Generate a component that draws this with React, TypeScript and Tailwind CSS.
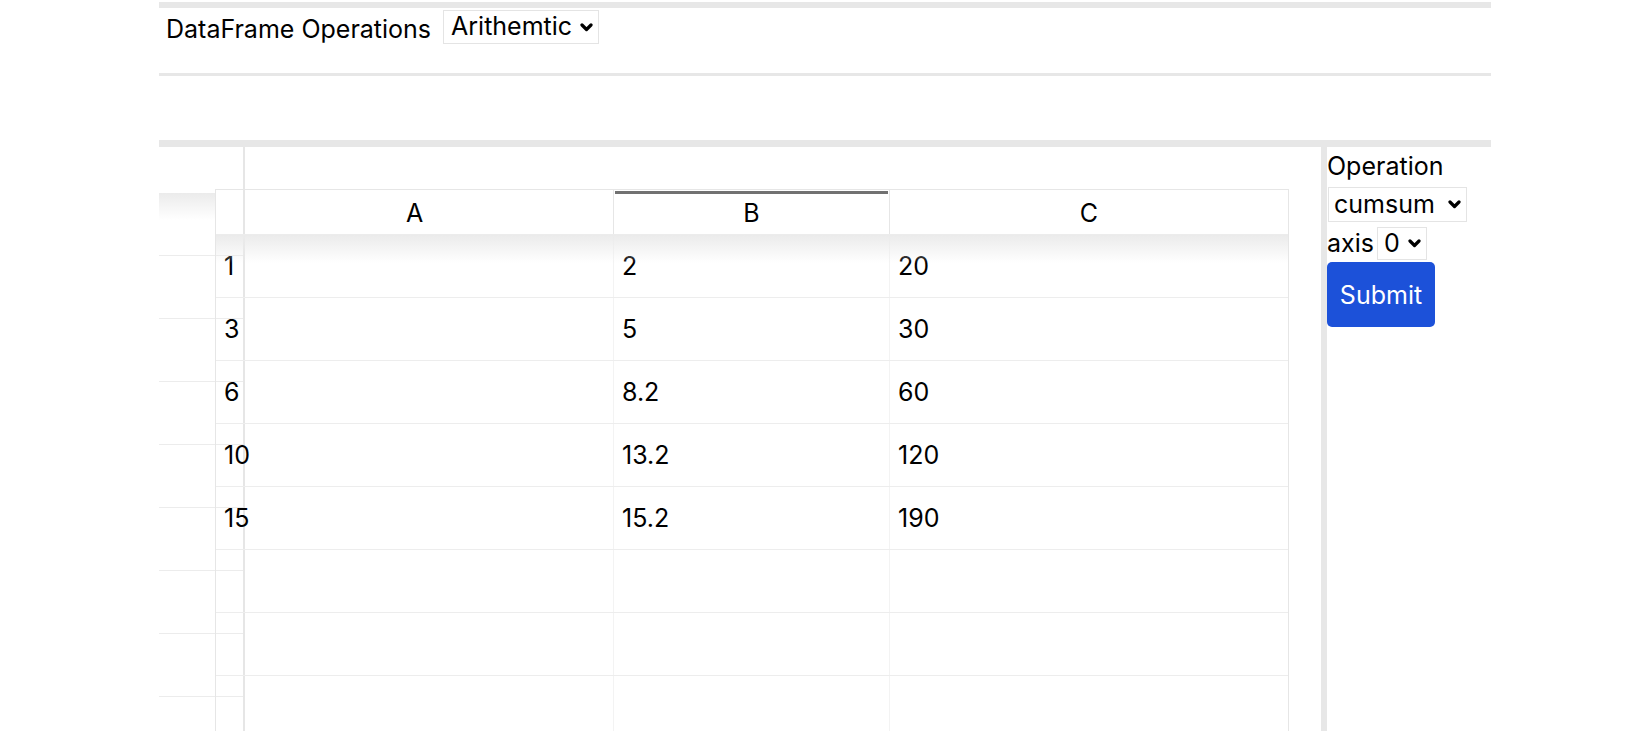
import React from 'react'

const ROWS: string[][] = [
  ['1', '2', '20'],
  ['3', '5', '30'],
  ['6', '8.2', '60'],
  ['10', '13.2', '120'],
  ['15', '15.2', '190'],
  ['', '', ''],
  ['', '', ''],
  ['', '', ''],
]

function Chevron() {
  return (
    <svg className="h-[9px] w-[13px] shrink-0" viewBox="0 0 13 9" fill="none" stroke="currentColor" strokeWidth={3.2} strokeLinecap="round" strokeLinejoin="round">
      <path d="M2 2 6.5 6.5 11 2" />
    </svg>
  )
}

function Dropdown({ value, options, className, pad }: { value: string; options: string[]; className: string; pad: string }) {
  return (
    <div className={`inline-flex items-center border border-[#e4e4e4] bg-white pr-[5px] ${className}`}>
      <select defaultValue={value} className={`min-w-0 flex-1 appearance-none bg-transparent outline-none ${pad}`}>
        {options.map(o => (
          <option key={o}>{o}</option>
        ))}
      </select>
      <Chevron />
    </div>
  )
}

function RowHeaders() {
  return (
    <div className="relative w-[86px] shrink-0 border-r-2 border-[#e6e6e6]">
      <div className="h-[109px] border-b border-[#ececec]" />
      {ROWS.map((_, i) => (
        <div key={i} className="h-[63px] border-b border-[#ececec]" />
      ))}
      <div className="pointer-events-none absolute left-0 top-[46px] h-[27px] w-[56px] bg-linear-to-b from-[#ebebeb] to-transparent" />
    </div>
  )
}

function Sheet() {
  return (
    <div className="relative ml-[-30px] mt-[42px] w-[1074px] shrink-0 self-start border-x border-t border-[#e6e6e6]">
      <div className="flex h-[45px] border-b border-[#ececec]">
        <div className="flex w-[397px] items-center justify-center pt-[3px]">A</div>
        <div className="relative flex w-[276px] items-center justify-center border-l border-[#e6e6e6] pt-[3px]">
          <div className="absolute inset-x-[1px] top-[1px] h-[3px] bg-[#717171]" />
          B
        </div>
        <div className="flex flex-1 items-center justify-center border-l border-[#e6e6e6] pt-[3px]">C</div>
      </div>
      <div className="relative">
        <div className="pointer-events-none absolute inset-x-0 top-0 h-[28px] bg-linear-to-b from-[#ebebeb] to-transparent" />
        {ROWS.map((r, i) => (
          <div key={i} className="flex h-[63px] border-b border-[#ededed]">
            <div className="flex w-[397px] items-center px-2 pt-[2px]">{r[0]}</div>
            <div className="flex w-[276px] items-center border-l border-[#f3f3f3] px-2 pt-[2px]">{r[1]}</div>
            <div className="flex flex-1 items-center border-l border-[#f3f3f3] px-2 pt-[2px]">{r[2]}</div>
          </div>
        ))}
      </div>
    </div>
  )
}

function Panel() {
  return (
    <div className="flex w-[164px] shrink-0 flex-col items-start pt-[4px]">
      <div className="leading-[30px]">Operation</div>
      <Dropdown value="cumsum" options={['cumsum', 'cumprod', 'cummax', 'cummin']} className="ml-[1px] mt-[6px] h-[35px] w-[139px]" pad="pl-[5px]" />
      <div className="mt-[5px] flex items-center">
        <span className="leading-[33px]">axis</span>
        <Dropdown value="0" options={['0', '1']} className="ml-[3px] h-[33px] w-[50px]" pad="pl-[6px]" />
      </div>
      <button className="mt-[2px] h-[65px] w-[108px] rounded-[5px] bg-[#1c51d9] pt-[2px] text-white">Submit</button>
    </div>
  )
}

export default function App() {
  return (
    <div className="h-screen overflow-hidden bg-white font-['Inter','Liberation_Sans',sans-serif] text-[25px] text-black">
      <div className="mx-auto w-[1332px]">
        <div className="mt-[2px] h-[6px] bg-[#e7e7e7]" />
        <div className="flex h-[65px] items-start pl-[7px] pt-[2px]">
          <span className="mt-[2px] leading-[34px]">DataFrame Operations</span>
          <Dropdown value="Arithemtic" options={['Arithemtic', 'Statistics', 'Logical']} className="ml-[12px] h-[34px] w-[156px]" pad="pl-[7px]" />
        </div>
        <div className="h-[3px] bg-[#e7e7e7]" />
        <div className="h-[64px]" />
        <div className="h-[7px] bg-[#e7e7e7]" />
        <div className="flex">
          <div className="flex w-[1162px] shrink-0">
            <RowHeaders />
            <Sheet />
          </div>
          <div className="w-[6px] shrink-0 bg-[#e7e7e7]" />
          <Panel />
        </div>
      </div>
    </div>
  )
}
